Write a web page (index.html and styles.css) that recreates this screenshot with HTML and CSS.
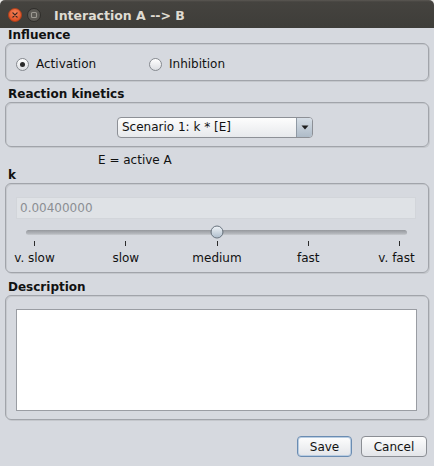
FILE: index.html
```html
<!DOCTYPE html>
<html>
<head>
<meta charset="utf-8">
<title>Interaction A --> B</title>
<link rel="stylesheet" href="styles.css">
</head>
<body>
<div class="window">
  <div class="titlebar">
    <span class="wbtn">
      <svg width="14" height="14" viewBox="0 0 14 14">
        <defs>
          <radialGradient id="cg" cx="50%" cy="35%" r="65%">
            <stop offset="0" stop-color="#f7865c"/>
            <stop offset="1" stop-color="#dc4a1e"/>
          </radialGradient>
        </defs>
        <circle cx="7" cy="7" r="6.5" fill="url(#cg)" stroke="#a9401c"/>
        <path d="M4.9 4.9L9.1 9.1M9.1 4.9L4.9 9.1" stroke="#3a2620" stroke-width="1.3" stroke-linecap="round"/>
      </svg>
    </span>
    <span class="wbtn">
      <svg width="14" height="14" viewBox="0 0 14 14">
        <circle cx="7" cy="7" r="6.5" fill="#5b5954" stroke="#2e2d2a"/>
        <rect x="4.5" y="4.5" width="5" height="5" rx="1" fill="none" stroke="#9c9992" stroke-width="1.1"/>
      </svg>
    </span>
    <span class="title">Interaction A --&gt; B</span>
  </div>

  <div class="content">
    <div class="label">Influence</div>
    <div class="panel p-influence">
      <div class="radio"><span class="rb checked"></span>Activation</div>
      <div class="radio"><span class="rb"></span>Inhibition</div>
    </div>

    <div class="label l-kinetics">Reaction kinetics</div>
    <div class="panel p-kinetics">
      <div class="combo">
        <span class="combo-text">Scenario 1: k * [E]</span>
        <span class="combo-arrow">
          <svg width="8" height="5" viewBox="0 0 8 5"><path d="M0.5 0.5H7.5L4 4.5Z" fill="#1e1e1e"/></svg>
        </span>
      </div>
    </div>

    <div class="note">E = active A</div>
    <div class="label">k</div>
    <div class="panel p-k">
      <div class="field">0.00400000</div>
      <div class="slider">
        <div class="track-row">
          <div class="track"><span class="thumb" style="left:50%"></span></div>
        </div>
        <div class="ticks"><span></span><span></span><span></span><span></span><span></span></div>
        <div class="scale">
          <span class="mark"><span>v. slow</span></span>
          <span class="mark"><span>slow</span></span>
          <span class="mark"><span>medium</span></span>
          <span class="mark"><span>fast</span></span>
          <span class="mark end"><span>v. fast</span></span>
        </div>
      </div>
    </div>

    <div class="label l-desc">Description</div>
    <div class="panel p-desc">
      <div class="textarea"></div>
    </div>

    <div class="actions">
      <button class="btn btn-save">Save</button>
      <button class="btn btn-cancel">Cancel</button>
    </div>
  </div>
</div>
</body>
</html>
```

FILE: styles.css
```css
html {
  background: #eceae6;
}
body {
  margin: 0;
  font-family: "DejaVu Sans", "Liberation Sans", sans-serif;
  font-size: 12px;
  color: #111;
}
.window {
  width: 434px;
  height: 466px;
  background: #d6d9df;
  border-radius: 5px 5px 0 0;
  overflow: hidden;
}
.titlebar {
  height: 28px;
  box-sizing: border-box;
  padding: 2px 0 0 8px;
  display: flex;
  align-items: center;
  background: linear-gradient(#5b5853 0, #45433f 2px, #3e3d39 100%);
}
.wbtn {
  display: flex;
  width: 14px;
  height: 14px;
}
.wbtn + .wbtn {
  margin-left: 5px;
}
.title {
  margin-left: 13px;
  font-weight: bold;
  font-size: 12.5px;
  color: #dfdbd2;
}
.content {
  padding: 0 5px;
}
.label {
  font-weight: bold;
  line-height: 15px;
  padding-left: 3px;
}
.l-kinetics {
  margin-top: 6px;
}
.l-desc {
  margin-top: 7px;
}
.panel {
  box-sizing: border-box;
  border: 1px solid #a1a4aa;
  border-radius: 6px;
  box-shadow: inset 1px 1px 0 #c6c9ce, 1px 1px 0 #c4c7cc;
}
.p-influence {
  height: 38px;
  padding: 12px 0 0 10px;
  display: grid;
  grid-template-columns: 133px auto;
  align-content: start;
}
.radio {
  display: flex;
  align-items: center;
  height: 16px;
  gap: 7px;
}
.rb {
  box-sizing: border-box;
  width: 13px;
  height: 13px;
  border-radius: 50%;
  border: 1px solid #868a90;
  background: linear-gradient(#ffffff, #dcdee2);
  display: flex;
  align-items: center;
  justify-content: center;
}
.rb.checked::after {
  content: "";
  width: 5px;
  height: 5px;
  border-radius: 50%;
  background: #2a2a2a;
}
.p-kinetics {
  height: 45px;
  padding: 14px 4px 0 0;
  display: flex;
  justify-content: center;
  align-items: flex-start;
}
.combo {
  box-sizing: border-box;
  width: 196px;
  height: 21px;
  border: 1px solid #8d9096;
  border-radius: 4px;
  background: linear-gradient(#fdfdfd, #e7e9ec);
  display: flex;
  overflow: hidden;
}
.combo-text {
  flex: 1;
  padding-left: 4px;
  line-height: 19px;
  color: #111;
}
.combo-arrow {
  width: 15px;
  border-left: 1px solid #8f99a4;
  background: linear-gradient(#d6dee6, #aebbc8);
  display: flex;
  align-items: center;
  justify-content: center;
}
.note {
  margin-top: 6px;
  line-height: 15px;
  padding-left: 93px;
}
.p-k {
  height: 90px;
  padding: 13px 12px 0 10px;
}
.field {
  box-sizing: border-box;
  height: 22px;
  line-height: 20px;
  padding-left: 3px;
  border: 1px solid #d2d5da;
  background: #dfe2e6;
  color: #8b8e93;
}
.slider {
  padding-top: 6px;
}
.track-row {
  height: 14px;
  display: flex;
  align-items: center;
  padding: 0 9px 0 10px;
}
.track {
  position: relative;
  flex: 1;
  height: 5px;
  border-radius: 3px;
  background: linear-gradient(#95989d, #b3b6bb 70%, #c9ccd0);
}
.thumb {
  position: absolute;
  top: 50%;
  width: 13px;
  height: 13px;
  box-sizing: border-box;
  border-radius: 50%;
  border: 1px solid #69747f;
  background: linear-gradient(#eef2f6, #b0bfcd);
  transform: translate(-50%, -50%);
}
.ticks {
  margin: 2px 16px 0 18px;
  height: 5px;
  display: flex;
  justify-content: space-between;
}
.ticks span {
  width: 1px;
  background: #2b2b2b;
}
.scale {
  margin: 5px 16px 0 18px;
  height: 15px;
  line-height: 15px;
  display: flex;
  justify-content: space-between;
}
.mark {
  width: 1px;
  display: flex;
  justify-content: center;
  white-space: nowrap;
}
.mark.end span {
  margin-right: 6px;
}
.p-desc {
  height: 125px;
  padding: 13px 11px 0 10px;
}
.textarea {
  height: 102px;
  box-sizing: border-box;
  background: #fff;
  border: 1px solid #9a9da3;
}
.actions {
  margin-top: 16px;
  padding-right: 2px;
  display: flex;
  justify-content: flex-end;
  gap: 9px;
}
.btn {
  box-sizing: border-box;
  height: 21px;
  padding: 0;
  font-family: "DejaVu Sans", "Liberation Sans", sans-serif;
  font-size: 12px;
  color: #111;
  border: 1px solid #8b8e94;
  border-radius: 4px;
  background: linear-gradient(#fdfdfd, #e3e5e9);
}
.btn-save {
  width: 55px;
  border-color: #6a8cb2;
  box-shadow: inset 0 0 0 1px #b9cde2;
}
.btn-cancel {
  width: 66px;
}
```
